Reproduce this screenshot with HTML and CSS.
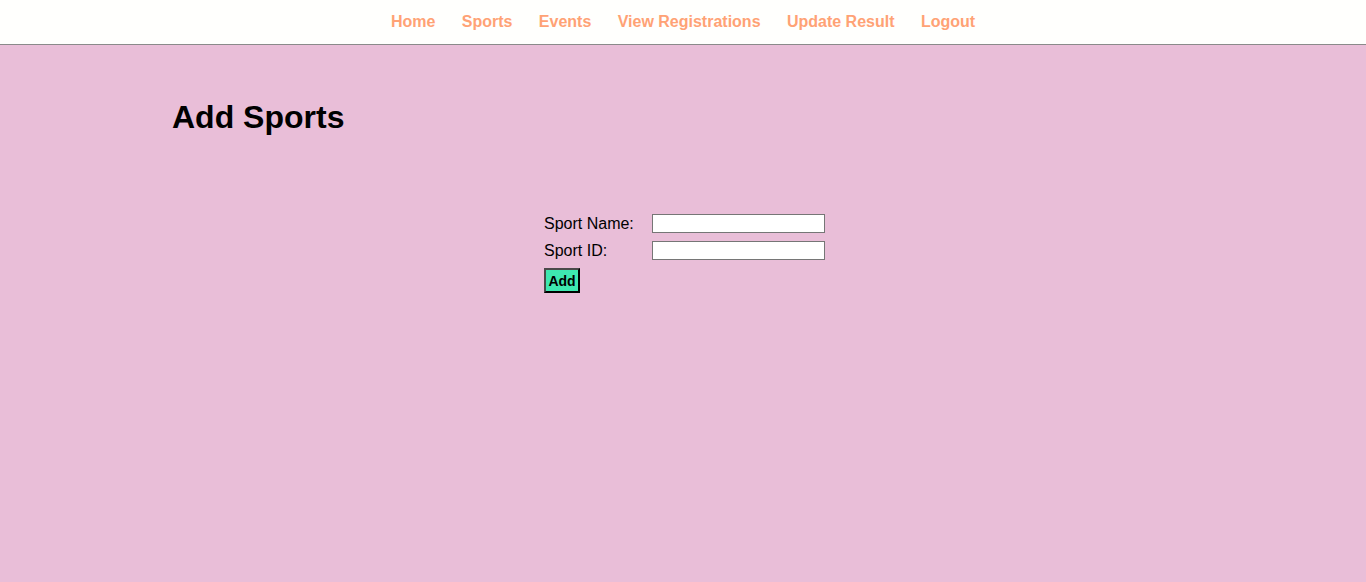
FILE: index.html
```html
<!DOCTYPE html>
<html>
<head>
<meta charset="utf-8">
<title>Add Sports</title>
<link rel="stylesheet" href="styles.css">
</head>
<body>
<nav class="topnav">
  <a href="#">Home</a>
  <a href="#">Sports</a>
  <a href="#">Events</a>
  <a href="#">View Registrations</a>
  <a href="#">Update Result</a>
  <a href="#">Logout</a>
</nav>
<main class="content">
  <h1 class="title">Add Sports</h1>
  <form class="sport-form">
    <label class="field-label" for="sname">Sport Name:</label>
    <input class="field-input" type="text" id="sname">
    <label class="field-label" for="sid">Sport ID:</label>
    <input class="field-input" type="text" id="sid">
    <button class="add-btn" type="button">Add</button>
  </form>
</main>
</body>
</html>
```

FILE: styles.css
```css
html, body {
  margin: 0;
  padding: 0;
}
body {
  background: #e9bed8;
  font-family: "Liberation Sans", Arial, sans-serif;
  min-height: 100vh;
}
.topnav {
  background: #fffffd;
  height: 44px;
  border-bottom: 1px solid #8a8a8a;
  display: flex;
  justify-content: center;
  align-items: center;
  gap: 26.4px;
}
.topnav a {
  color: #ffa275;
  font-weight: bold;
  font-size: 16px;
  text-decoration: none;
}
.content {
  padding: 54px 0 0 172px;
}
.title {
  margin: 0;
  font-size: 32px;
  font-weight: bold;
  color: #000;
  line-height: 37px;
}
.sport-form {
  margin: 78px 0 0 372px;
  display: grid;
  grid-template-columns: 108px 173px;
  row-gap: 8px;
  align-items: center;
  width: 281px;
}
.field-label {
  font-size: 16px;
  color: #000;
  line-height: 19px;
}
.field-input {
  box-sizing: border-box;
  width: 173px;
  height: 19px;
  margin: 0;
  border: 1px solid #767676;
  background: #fff;
  padding: 0 2px;
}
.add-btn {
  grid-column: 1;
  justify-self: start;
  box-sizing: border-box;
  width: 36px;
  height: 25px;
  margin: 0;
  padding: 0;
  background: #3ee8b0;
  border: 2px outset #333;
  border-color: #4a4a4a #1a1a1a #1a1a1a #4a4a4a;
  font-family: "Liberation Sans", Arial, sans-serif;
  font-weight: bold;
  font-size: 14px;
  color: #000;
}
```
